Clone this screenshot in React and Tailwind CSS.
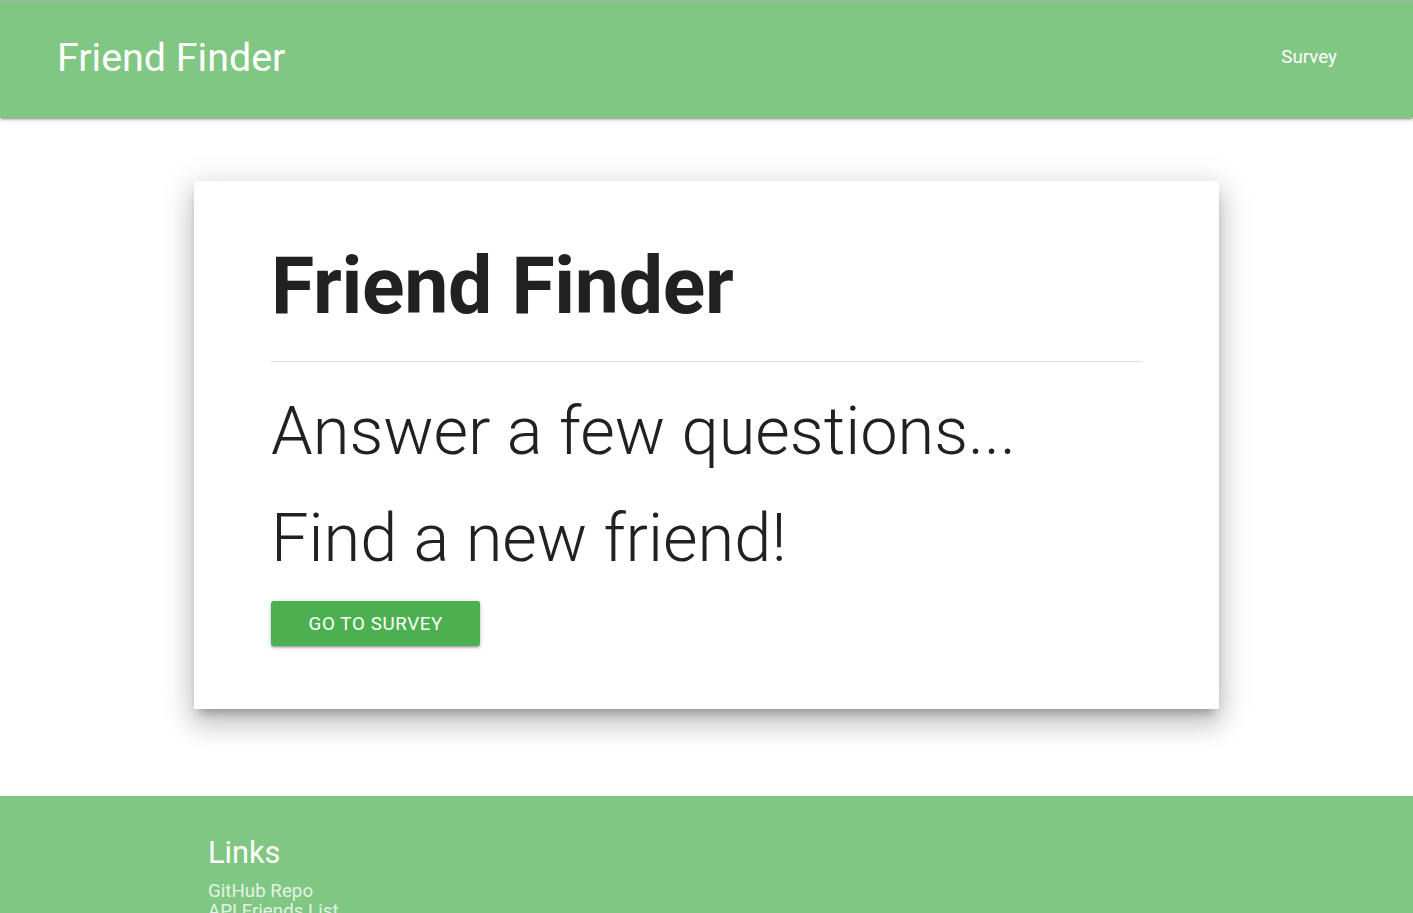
export default function App() {
  return (
    <div className="min-h-[913px] bg-white font-['Roboto',sans-serif] flex flex-col">
      <nav className="relative z-10 h-[118px] border-t border-[#b3b3b3] bg-[#81c784] shadow-[0_2px_2px_0_rgba(0,0,0,0.14),0_3px_1px_-2px_rgba(0,0,0,0.12),0_1px_5px_0_rgba(0,0,0,0.2)] flex items-center justify-between pl-[57px] pr-[76px] pb-[5px]">
        <a className="text-white text-[39.4px] leading-[43px] font-normal">Friend Finder</a>
        <a className="text-white text-[18.75px] leading-[22px]">Survey</a>
      </nav>
      <main className="flex justify-center pt-[63px] pb-[87px]">
        <div className="w-[1025px] bg-white pl-[77px] pr-[78px] pt-[62px] pb-[63px] shadow-[0_16px_24px_2px_rgba(0,0,0,0.14),0_6px_30px_5px_rgba(0,0,0,0.12),0_8px_10px_-5px_rgba(0,0,0,0.3)]">
          <h1 className="text-[78.75px] leading-[86.6px] font-bold text-[#212121] tracking-[-0.3px]">Friend Finder</h1>
          <hr className="mt-[31.6px] w-[871px] border-0 border-t border-[#e0e0e0]" />
          <p className="mt-[32.5px] text-[66.75px] leading-[73.4px] font-light text-[#212121]">Answer a few questions...</p>
          <p className="mt-[33.6px] text-[66.75px] leading-[73.4px] font-light text-[#212121]">Find a new friend!</p>
          <button className="mt-[26px] h-[45px] px-[37.5px] rounded-[2.5px] bg-[#4caf50] text-white text-[18.75px] tracking-[0.625px] uppercase shadow-[0_2px_2px_0_rgba(0,0,0,0.14),0_3px_1px_-2px_rgba(0,0,0,0.12),0_1px_5px_0_rgba(0,0,0,0.2)]">Go to Survey</button>
        </div>
      </main>
      <footer className="flex-1 bg-[#81c784] pl-[208px] pt-[39.6px]">
        <h5 className="text-white text-[30.75px] leading-[33.8px]">Links</h5>
        <ul className="mt-[12px] text-[18.75px] leading-[20px] text-[rgba(255,255,255,0.8)]">
          <li><a>GitHub Repo</a></li>
          <li><a>API Friends List</a></li>
        </ul>
      </footer>
    </div>
  );
}
